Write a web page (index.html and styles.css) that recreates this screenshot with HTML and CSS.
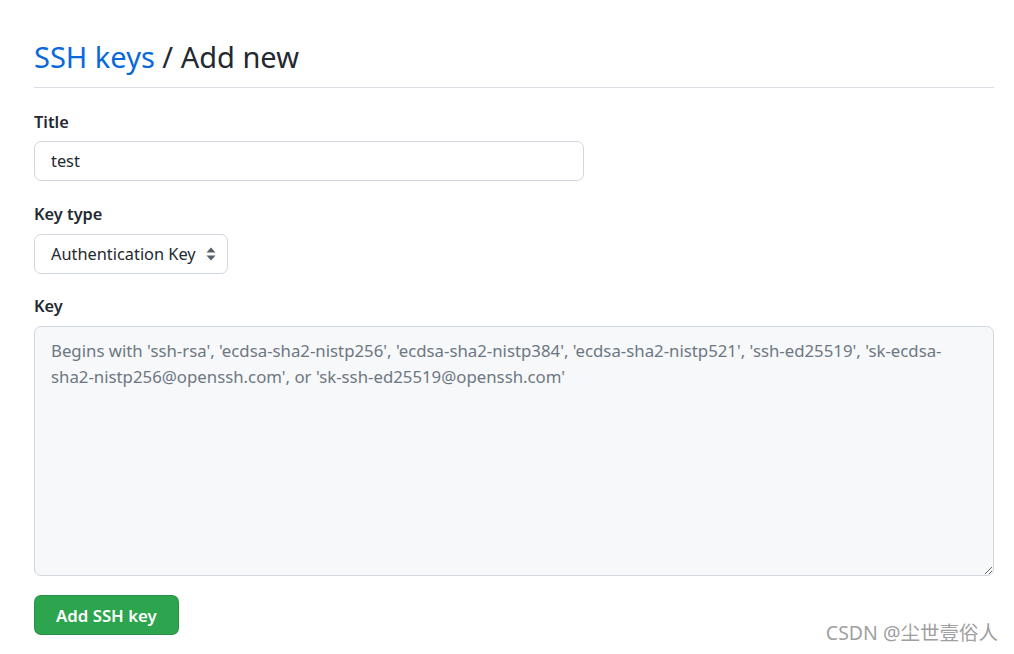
FILE: index.html
```html
<!DOCTYPE html>
<html>
<head>
<meta charset="utf-8">
<link rel="stylesheet" href="styles.css">
</head>
<body>
<div class="page">
  <div class="subhead">
    <h2 class="subhead-heading"><a class="link" href="#">SSH keys</a> / Add new</h2>
  </div>
  <form class="form">
    <div class="form-group">
      <label class="label">Title</label>
      <input class="input title-input" type="text" value="test">
    </div>
    <div class="form-group form-group-tight">
      <label class="label label-loose">Key type</label>
      <div class="select">
        <span class="select-text">Authentication Key</span>
        <svg class="select-arrow" width="10" height="16" viewBox="0 0 10 16"><path d="M5 1.5 L9.5 6.5 H0.5 Z M5 14.5 L9.5 9.5 H0.5 Z" fill="#57606a"/></svg>
      </div>
    </div>
    <div class="form-group">
      <label class="label label-loose">Key</label>
      <textarea class="textarea" placeholder="Begins with 'ssh-rsa', 'ecdsa-sha2-nistp256', 'ecdsa-sha2-nistp384', 'ecdsa-sha2-nistp521', 'ssh-ed25519', 'sk-ecdsa-sha2-nistp256@openssh.com', or 'sk-ssh-ed25519@openssh.com'"></textarea>
    </div>
    <button class="btn-primary" type="button">Add SSH key</button>
  </form>
  <div class="watermark">CSDN @尘世壹俗人</div>
</div>
</body>
</html>
```
FILE: styles.css
```css
* { box-sizing: border-box; }
html, body { margin: 0; padding: 0; background: #fff; }
body {
  font-family: "Noto Sans", "Noto Sans CJK SC", sans-serif;
  color: #24292f;
  font-size: 16.35px;
}
.page {
  padding: 37px 20px 0 34px;
  width: 1014px;
  height: 654px;
  position: relative;
}
.subhead {
  border-bottom: 1px solid #d8dee4;
  padding-bottom: 10px;
  margin-bottom: 22px;
  width: 960px;
}
.subhead-heading {
  margin: 0;
  font-weight: 400;
  font-size: 29px;
  line-height: 40px;
}
.link { color: #0969da; text-decoration: none; }
.form-group { margin-bottom: 21px; }
.form-group-tight { margin-bottom: 20px; }
.label {
  display: block;
  font-weight: 600;
  font-size: 16.35px;
  line-height: 24px;
  margin-bottom: 7px;
}
.label-loose { margin-bottom: 8px; }
.input {
  display: block;
  font-family: inherit;
  font-size: 16.35px;
  color: #24292f;
  height: 40px;
  padding: 0 16px;
  border: 1px solid #d0d7de;
  border-radius: 7px;
  outline: none;
  background: #fff;
}
.title-input { width: 550px; }
.select {
  display: flex;
  width: max-content;
  align-items: center;
  gap: 10px;
  height: 40px;
  padding: 0 11px 0 16px;
  border: 1px solid #d0d7de;
  border-radius: 7px;
  background: #fff;
}
.select-text { line-height: 24px; }
.textarea {
  display: block;
  width: 960px;
  height: 250px;
  font-family: inherit;
  font-size: 16.8px;
  line-height: 26px;
  padding: 11px 16px;
  border: 1px solid #d0d7de;
  border-radius: 7px;
  background: #f6f8fa;
  color: #24292f;
  outline: none;
  resize: vertical;
}
.textarea::placeholder { color: #6e7781; }
.btn-primary {
  display: block;
  font-family: inherit;
  font-size: 16.8px;
  font-weight: 600;
  color: #fff;
  background: #2da44e;
  border: 1px solid rgba(27,31,36,0.15);
  border-radius: 7px;
  height: 40px;
  padding: 0 21px;
  margin-top: -2px;
}
.watermark {
  position: absolute;
  right: 16px;
  bottom: 8px;
  font-size: 19.5px;
  color: #a0a0a0;
}
```
